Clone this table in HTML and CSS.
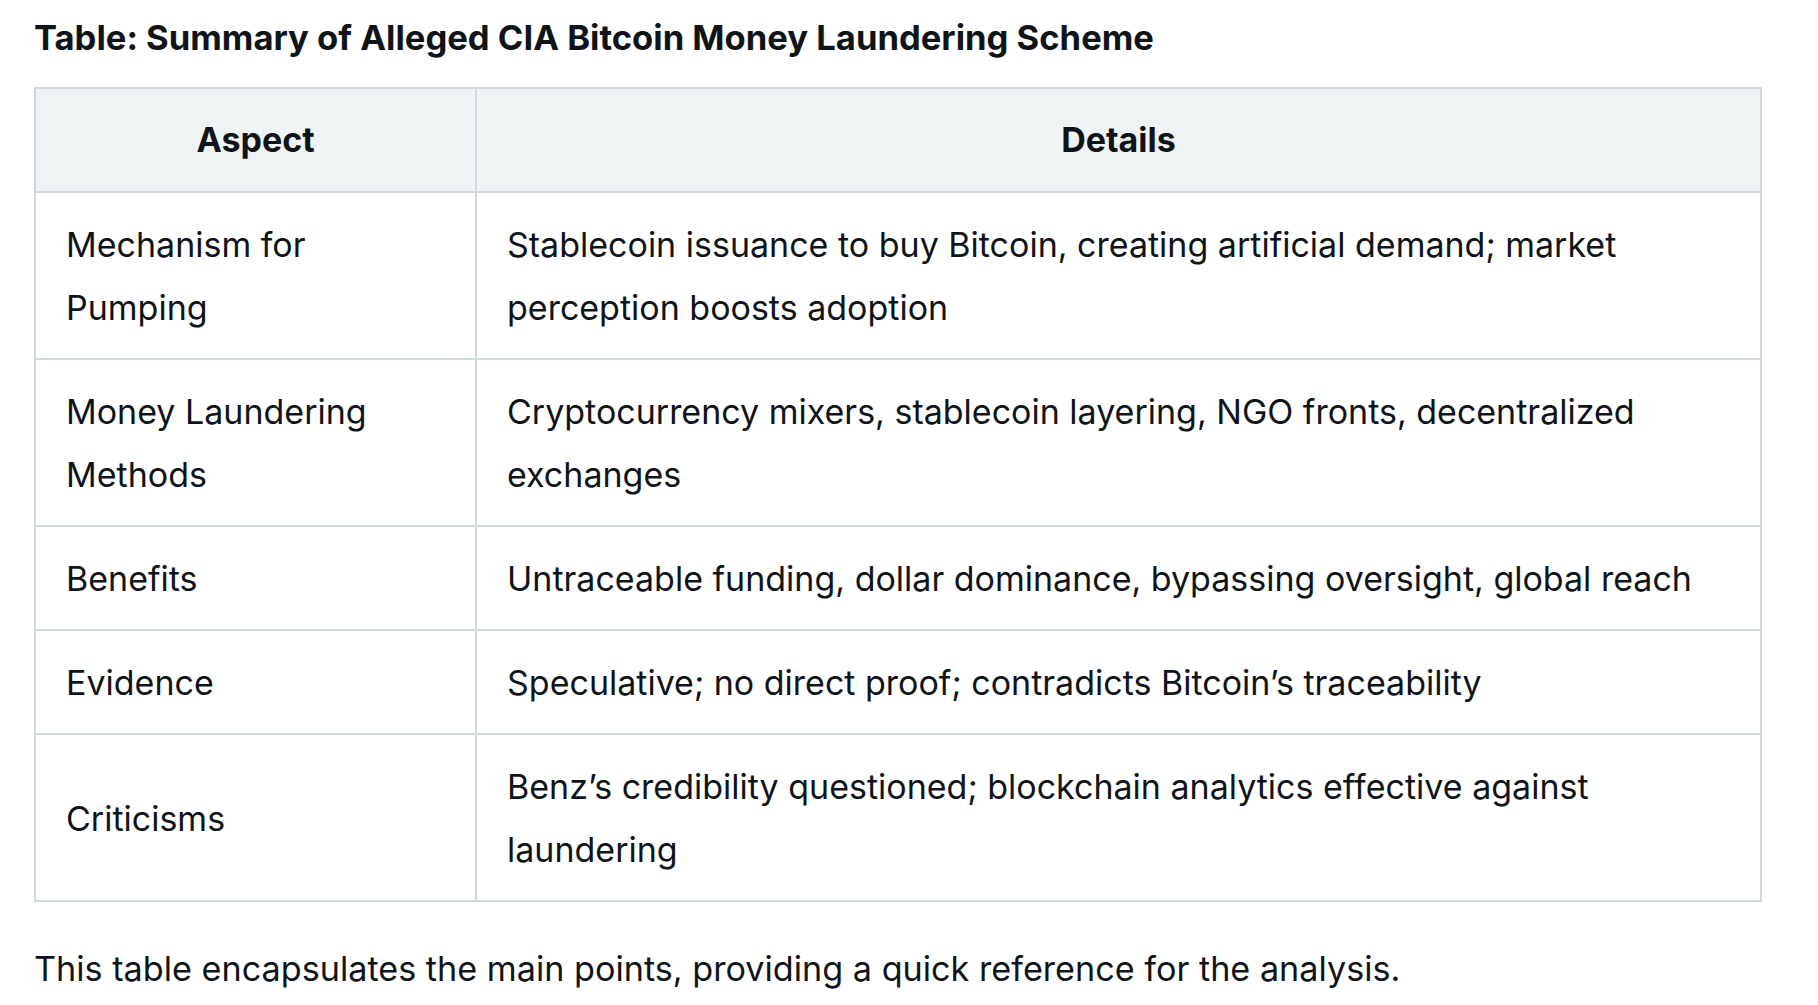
FILE: index.html
```html
<!DOCTYPE html>
<html lang="en">
<head>
<meta charset="utf-8">
<title>Summary Table</title>
<link rel="stylesheet" href="styles.css">
</head>
<body>
<main class="page">
  <h3 class="title">Table: Summary of Alleged CIA Bitcoin Money Laundering Scheme</h3>
  <table class="summary">
    <colgroup>
      <col class="col-aspect">
      <col class="col-details">
    </colgroup>
    <thead>
      <tr><th>Aspect</th><th>Details</th></tr>
    </thead>
    <tbody>
      <tr><td>Mechanism for Pumping</td><td>Stablecoin issuance to buy Bitcoin, creating artificial demand; market perception boosts adoption</td></tr>
      <tr><td>Money Laundering Methods</td><td>Cryptocurrency mixers, stablecoin layering, NGO fronts, decentralized exchanges</td></tr>
      <tr><td>Benefits</td><td>Untraceable funding, dollar dominance, bypassing oversight, global reach</td></tr>
      <tr><td>Evidence</td><td>Speculative; no direct proof; contradicts Bitcoin’s traceability</td></tr>
      <tr><td>Criticisms</td><td>Benz’s credibility questioned; blockchain analytics effective against laundering</td></tr>
    </tbody>
  </table>
  <p class="note">This table encapsulates the main points, providing a quick reference for the analysis.</p>
</main>
</body>
</html>
```

FILE: styles.css
```css
html, body {
  margin: 0;
  padding: 0;
  background: #ffffff;
}

body {
  font-family: Inter, "Noto Sans", "Liberation Sans", sans-serif;
  color: #0f1419;
}

.page {
  padding: 14px 0 0 34px;
}

.title {
  margin: 0;
  font-size: 34.6px;
  font-weight: 700;
  line-height: 46px;
}

.summary {
  margin-top: 27px;
  width: 1726px;
  border-collapse: collapse;
  table-layout: fixed;
  font-size: 34px;
  line-height: 63px;
}

.col-aspect { width: 441px; }
.col-details { width: 1285px; }

.summary th,
.summary td {
  border: 2px solid #cfd9de;
  padding: 20px 30px 19px;
  text-align: left;
  vertical-align: middle;
}

.summary th {
  background: #eff3f4;
  font-weight: 700;
  text-align: center;
  padding: 19px 30px 20px;
}

.note {
  margin: 36px 0 0;
  font-size: 34.2px;
  line-height: 62px;
}
```
